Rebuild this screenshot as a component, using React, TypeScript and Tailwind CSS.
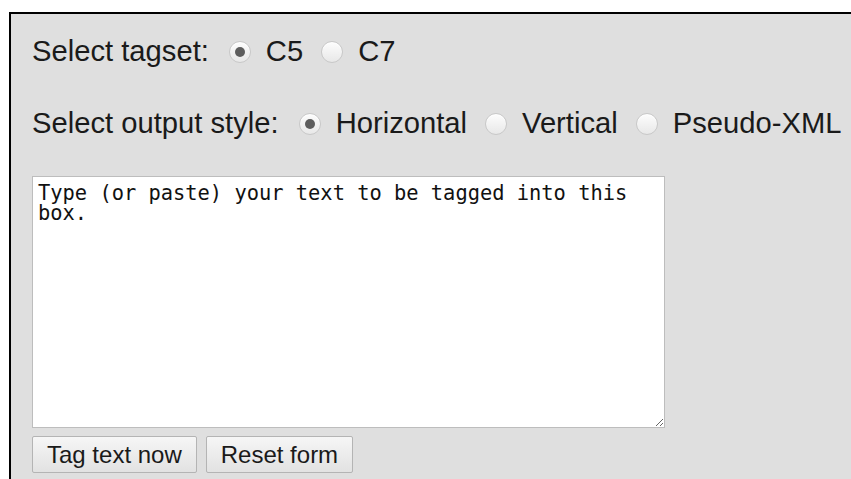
import React from "react";

function Radio({ checked, first }: { checked?: boolean; first?: boolean }) {
  return (
    <span
      className={
        (first ? "ml-[20px] " : "ml-[18px] ") +
        "mr-[15px] flex h-[22px] w-[22px] shrink-0 items-center justify-center rounded-full border border-[#c8c8c8] bg-gradient-to-b from-[#fdfdfd] to-[#e8e8e8] shadow-[inset_0_1px_1px_rgba(255,255,255,0.9)]"
      }
    >
      {checked && <span className="h-[10px] w-[10px] rounded-full bg-[#5e5e5e]" />}
    </span>
  );
}

function Button({ children }: { children: React.ReactNode }) {
  return (
    <button className="flex h-[37px] items-center rounded-[2px] border border-[#b4b4b4] bg-gradient-to-b from-[#f6f6f6] to-[#e2e2e2] px-[14px] text-[24px] text-[#1a1a1a]">
      {children}
    </button>
  );
}

export default function App() {
  return (
    <div
      className="h-[479px] w-[851px] overflow-hidden bg-white"
      style={{ fontFamily: '"Liberation Sans", Arial, sans-serif' }}
    >
      <div className="ml-[9px] mt-[12px] h-[467px] border-l-2 border-t-2 border-black bg-[#dfdfdf] pl-[21px] pt-[16px] text-[#1a1a1a]">
        <div className="flex h-[44px] items-center text-[29.2px]">
          <span>Select tagset:</span>
          <Radio checked first />
          <span>C5</span>
          <Radio />
          <span>C7</span>
        </div>
        <div className="mt-[28px] flex h-[44px] items-center whitespace-nowrap text-[29.2px]">
          <span>Select output style:</span>
          <Radio checked first />
          <span>Horizontal</span>
          <Radio />
          <span>Vertical</span>
          <Radio />
          <span>Pseudo-XML</span>
        </div>
        <textarea
          className="mt-[30px] block h-[252px] w-[633px] border border-[#bdbdbd] bg-white px-[5px] pt-[6px] text-[20.4px] leading-[20px] text-[#111111] outline-none"
          style={{ fontFamily: '"DejaVu Sans Mono", "Liberation Mono", monospace' }}
          defaultValue="Type (or paste) your text to be tagged into this box."
        />
        <div className="mt-[8px] flex gap-[9px]">
          <Button>Tag text now</Button>
          <Button>Reset form</Button>
        </div>
      </div>
    </div>
  );
}
